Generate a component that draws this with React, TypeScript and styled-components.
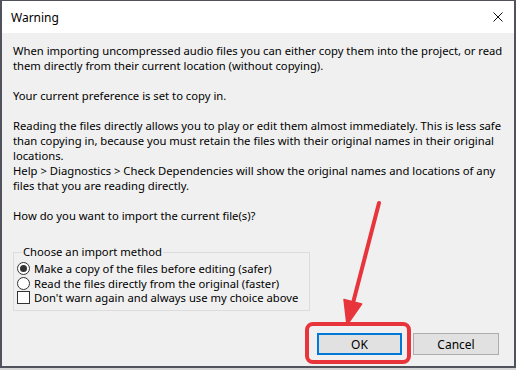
import styled, { createGlobalStyle } from 'styled-components';

const GlobalStyle = createGlobalStyle`
  html, body {
    margin: 0;
    padding: 0;
    background: #d6d6d6;
  }
  body {
    font-family: 'Noto Sans', 'Liberation Sans', sans-serif;
    font-size: 11.25px;
    color: #000;
  }
`;

const RED = '#e8353c';

const Stage = styled.div`
  position: relative;
  width: 516px;
  height: 370px;
  overflow: hidden;
`;

const Window = styled.div`
  box-sizing: border-box;
  width: 516px;
  height: 368px;
  display: flex;
  flex-direction: column;
  border: 2px solid #50535c;
  border-top-width: 1px;
  background: #f0f0f0;
`;

const TitleBar = styled.div`
  height: 32px;
  flex: 0 0 32px;
  background: #fff;
  display: flex;
  align-items: center;
  justify-content: space-between;
  padding: 0 9px 0 9px;
  font-size: 12px;
`;

const CloseIcon = styled.svg`
  width: 10px;
  height: 10px;
  margin-right: 2px;
`;

const Body = styled.div`
  flex: 1;
  display: flex;
  flex-direction: column;
  padding: 10px 11px 0 11px;
`;

const Para = styled.div`
  line-height: 15px;
  white-space: nowrap;
  margin-bottom: 15px;
`;

const Line = styled.span`
  display: block;
`;

const Group = styled.fieldset`
  box-sizing: border-box;
  width: 297px;
  min-width: 0;
  margin: 7px 0 0 0;
  padding: 2px 0 5px 3px;
  border: 1px solid #dcdcdc;
  display: flex;
  flex-direction: column;
`;

const Legend = styled.legend`
  padding: 0 1px;
  margin-left: 5px;
  line-height: 14px;
`;

const Option = styled.label`
  display: flex;
  align-items: center;
  gap: 4px;
  height: 14.7px;
  line-height: 13px;
  white-space: nowrap;
`;

const Radio = styled.span<{ $checked?: boolean }>`
  box-sizing: border-box;
  flex: 0 0 13px;
  width: 13px;
  height: 13px;
  border-radius: 50%;
  border: 1px solid #333;
  background: #fff;
  display: flex;
  align-items: center;
  justify-content: center;
  &::after {
    content: '';
    width: 7px;
    height: 7px;
    border-radius: 50%;
    background: #333;
    display: ${(p) => (p.$checked ? 'block' : 'none')};
  }
`;

const Check = styled.span`
  box-sizing: border-box;
  flex: 0 0 13px;
  width: 13px;
  height: 13px;
  border: 1px solid #333;
  background: #fff;
`;

const ButtonRow = styled.div`
  margin-top: auto;
  margin-bottom: 11px;
  display: flex;
  justify-content: flex-end;
  gap: 11px;
  padding-right: 4px;
`;

const Button = styled.div<{ $default?: boolean }>`
  box-sizing: border-box;
  width: ${(p) => (p.$default ? 85 : 86)}px;
  height: 22px;
  display: flex;
  align-items: center;
  justify-content: center;
  font-size: 12px;
  background: #e1e1e1;
  border: ${(p) => (p.$default ? '2px solid #0078d7' : '1px solid #adadad')};
`;

const Overlay = styled.svg`
  position: absolute;
  left: 0;
  top: 0;
  pointer-events: none;
`;

export default function App() {
  return (
    <>
      <GlobalStyle />
      <Stage>
        <Window>
          <TitleBar>
            <span>Warning</span>
            <CloseIcon viewBox="0 0 10 10">
              <path d="M0.5 0.5 L9.5 9.5 M9.5 0.5 L0.5 9.5" stroke="#111" strokeWidth="1" />
            </CloseIcon>
          </TitleBar>
          <Body>
            <Para>
              <Line>When importing uncompressed audio files you can either copy them into the project, or read</Line>
              <Line>them directly from their current location (without copying).</Line>
            </Para>
            <Para>
              <Line>Your current preference is set to copy in.</Line>
            </Para>
            <Para>
              <Line>Reading the files directly allows you to play or edit them almost immediately. This is less safe</Line>
              <Line>than copying in, because you must retain the files with their original names in their original</Line>
              <Line>locations.</Line>
              <Line>Help &gt; Diagnostics &gt; Check Dependencies will show the original names and locations of any</Line>
              <Line>files that you are reading directly.</Line>
            </Para>
            <Para>
              <Line>How do you want to import the current file(s)?</Line>
            </Para>
            <Group>
              <Legend>Choose an import method</Legend>
              <Option>
                <Radio $checked />
                Make a copy of the files before editing (safer)
              </Option>
              <Option>
                <Radio />
                Read the files directly from the original (faster)
              </Option>
              <Option>
                <Check />
                Don't warn again and always use my choice above
              </Option>
            </Group>
            <ButtonRow>
              <Button $default>OK</Button>
              <Button>Cancel</Button>
            </ButtonRow>
          </Body>
        </Window>
        <Overlay width="516" height="370" viewBox="0 0 516 370">
          <rect x="307" y="324" width="102" height="38" rx="6" fill="none" stroke={RED} strokeWidth="4" />
          <line x1="379" y1="203" x2="353" y2="303" stroke={RED} strokeWidth="4" strokeLinecap="round" />
          <polygon points="347,325 344,299.5 361.6,304" fill={RED} stroke={RED} strokeWidth="1.5" strokeLinejoin="round" />
        </Overlay>
      </Stage>
    </>
  );
}
